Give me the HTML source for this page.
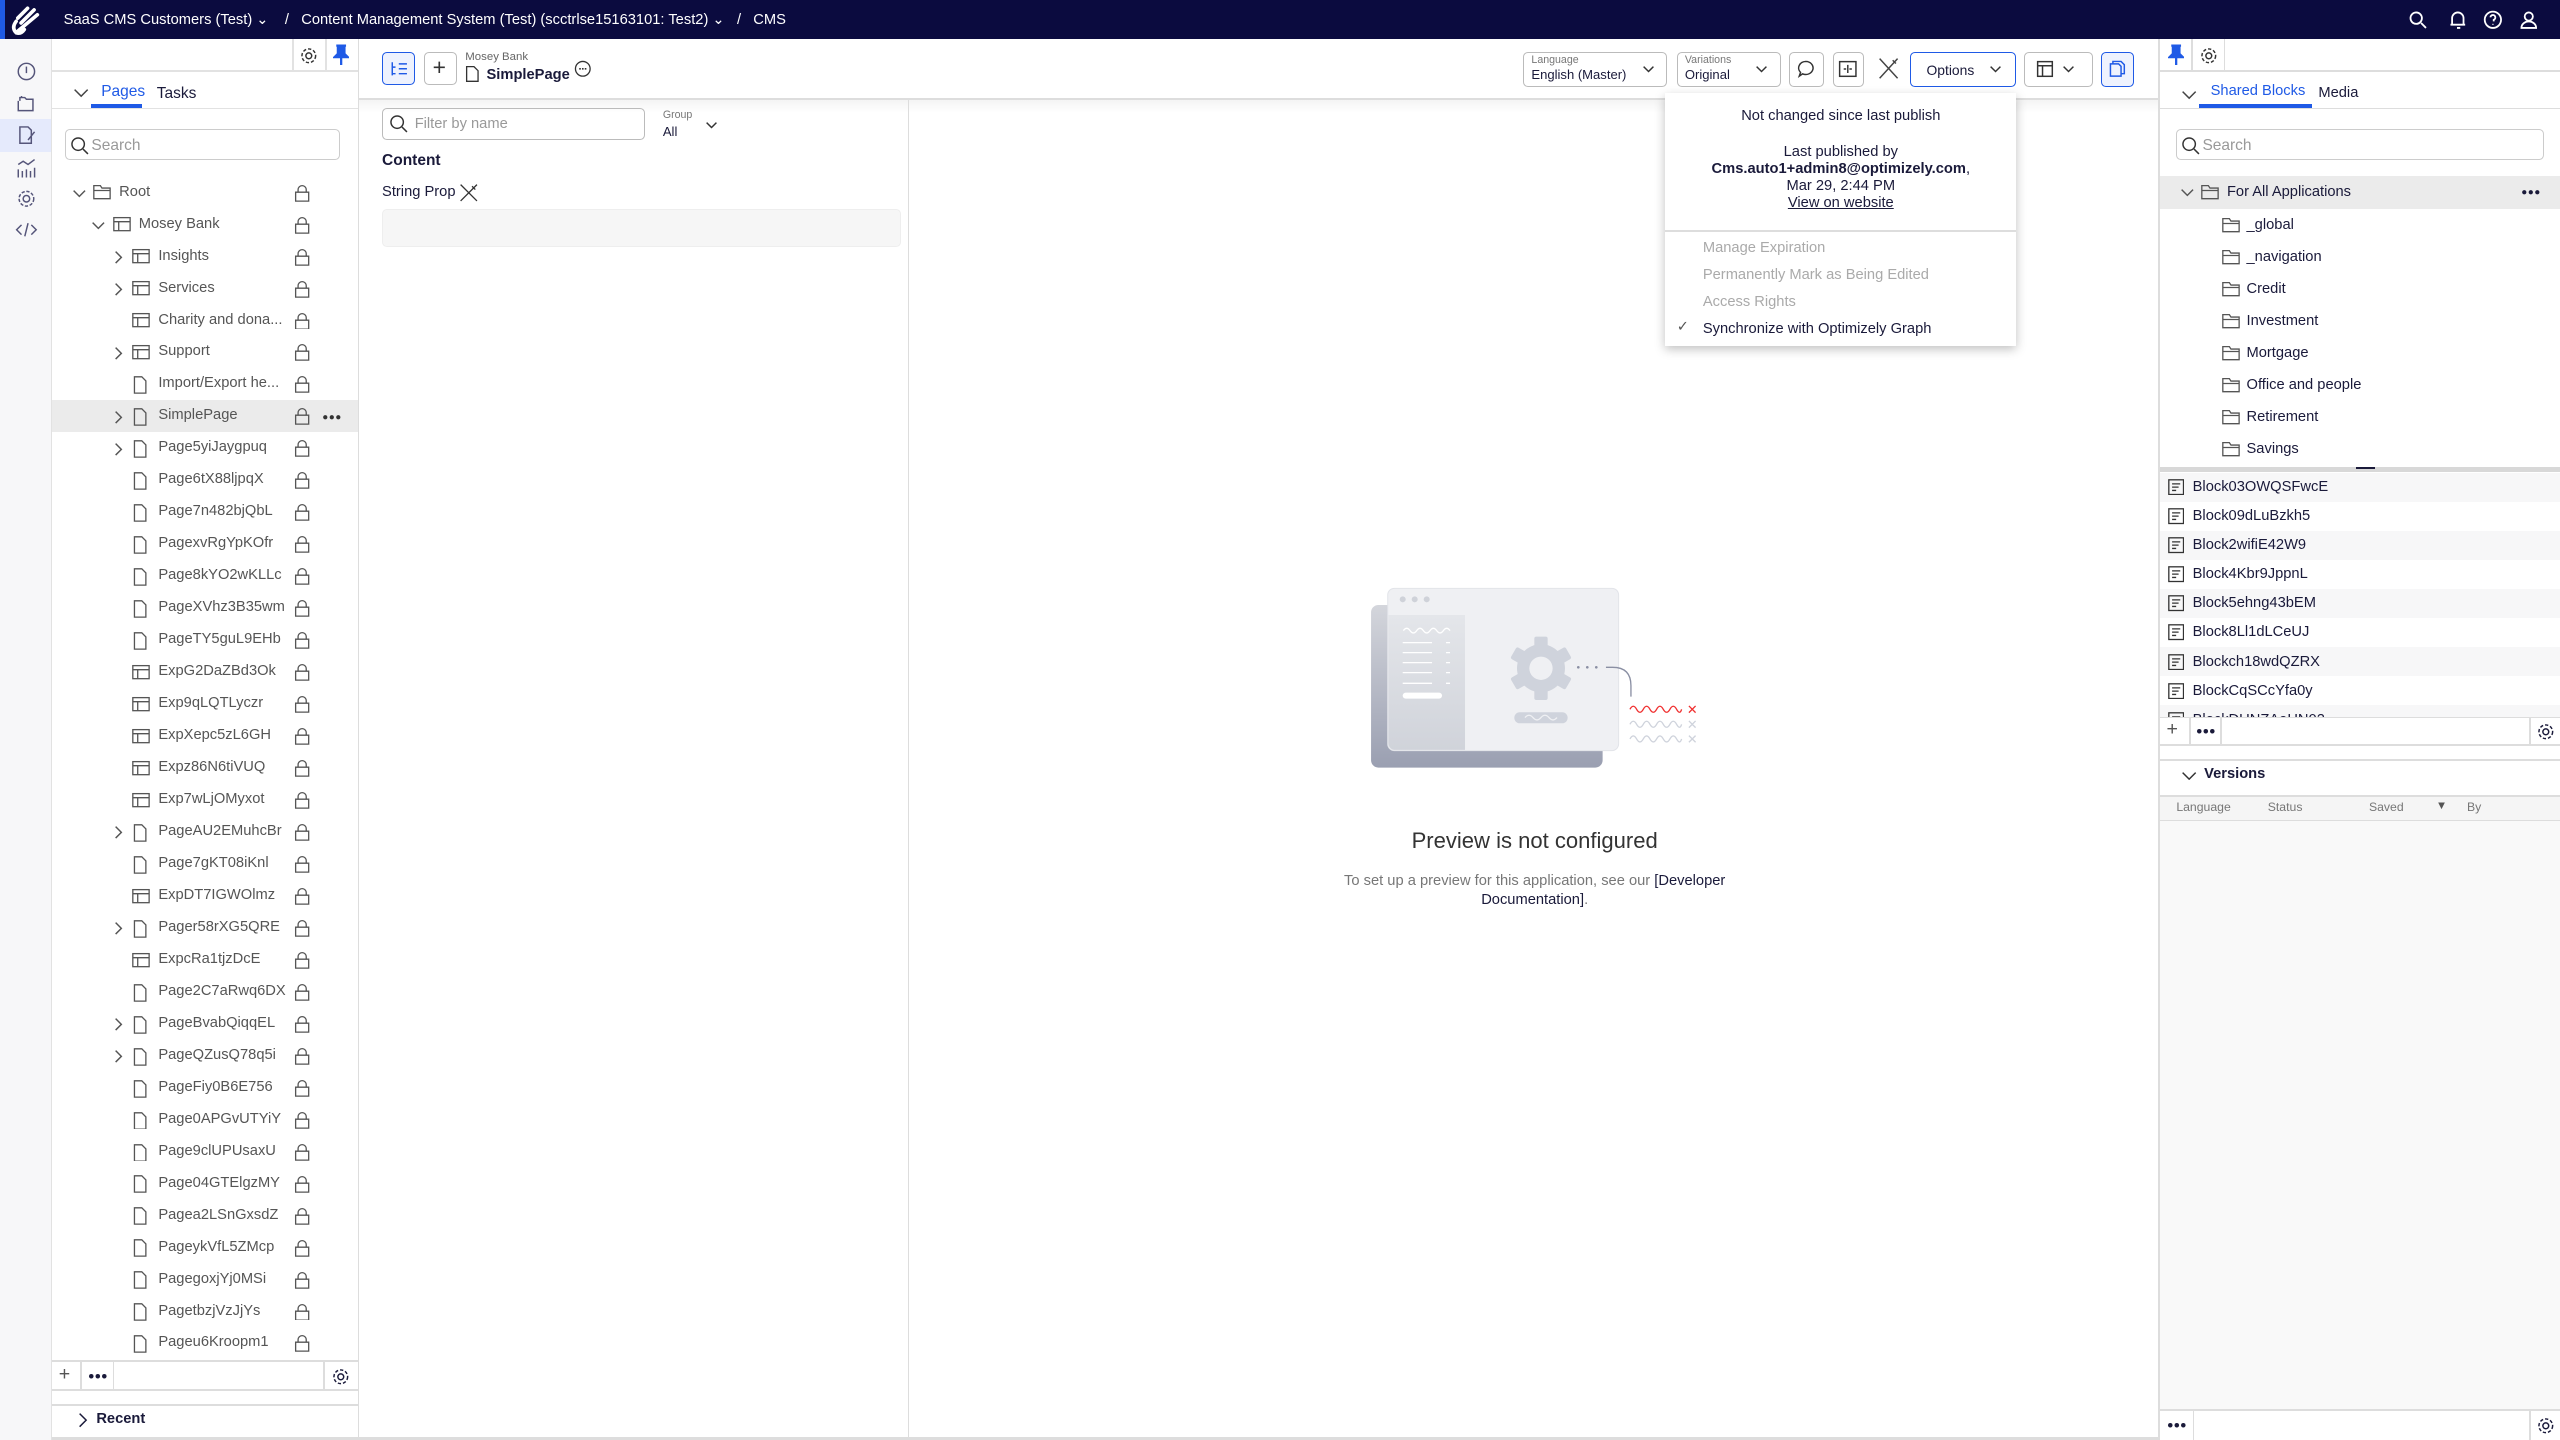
<!DOCTYPE html>
<html><head><meta charset="utf-8">
<style>
html,body{margin:0;padding:0;width:2560px;height:1440px;overflow:hidden;background:#fff}
#w{zoom:1.632653;width:1568px;height:882px;position:relative;font-family:"Liberation Sans",sans-serif;color:#1a1a3a;font-size:9px}
.a{position:absolute}
svg{display:block}
.row{position:absolute;left:32px;width:187px;height:19.6px;font-size:9px;color:#555}
.row span{position:absolute;top:4px;white-space:nowrap}
.bl{position:absolute;left:1323px;width:245px;height:17.8px;font-size:9px;color:#1a1a3a}
.fr{position:absolute;left:1323px;width:245px;height:19.6px;font-size:9px;color:#1a1a3a}
.btn{position:absolute;border:1px solid #bbb;border-radius:3px;background:#fff;box-sizing:border-box}
</style></head><body><div id="w">

<!-- top bar -->
<div class="a" style="left:0;top:0;width:1568px;height:24px;background:#0b0b3f"></div>
<div class="a" style="left:0;top:0;width:3px;height:24px;background:#1f5ae6"></div>
<svg class="a" style="left:5px;top:3px" width="20" height="19" viewBox="0 0 20 19"><path d="M12 2 L6 8 M16 3 L8 11 M18 6 L6 16 M5 10 Q2 14 5 17 Q8 18 10 15" stroke="#fff" stroke-width="2.2" fill="none" stroke-linecap="round"/></svg>
<div class="a" style="left:39px;top:7px;color:#fff;font-size:9px;white-space:nowrap">SaaS CMS Customers (Test) ⌄ &nbsp;&nbsp;&nbsp;/&nbsp;&nbsp; Content Management System (Test) (scctrlse15163101: Test2) ⌄ &nbsp;&nbsp;/&nbsp;&nbsp; CMS</div>
<svg class="a" style="left:1475px;top:6px" width="90" height="12" viewBox="0 0 90 12" fill="none" stroke="#fff" stroke-width="1.1"><circle cx="5" cy="5" r="3.5"/><path d="M8 8l3 3"/><path d="M26 9h9M27 9V5a3.5 3.5 0 0 1 7 0v4M30 11h2"/><circle cx="52" cy="6" r="5"/><path d="M50.5 4.5a1.5 1.5 0 1 1 2 1.5v1M52 8.5v.5"/><circle cx="74" cy="4" r="2.5"/><path d="M69.5 11a4.5 4 0 0 1 9 0z"/></svg>

<!-- left rail -->
<div class="a" style="left:0;top:24px;width:31px;height:858px;background:#f7f7f9;border-right:1px solid #e2e2e2"></div>
<div class="a" style="left:0;top:73px;width:31px;height:20px;background:#e5eafc"></div>
<svg class="a" style="left:9px;top:37px" width="14" height="112" viewBox="0 0 14 112" fill="none" stroke="#55557a" stroke-width="0.9"><circle cx="7" cy="7" r="5"/><path d="M7 4v4"/><path d="M2 25v6h9v-7H7l-1-1H3v2M4 23v-1"/><path d="M3 41h5l2 2v8H3z M12 44l-4 5"/><path d="M2 72V67M4.5 72v-4M7 72v-5M9.5 72v-4M12 72v-6M2 64l3-2 3 2 4-3"/><circle cx="7" cy="85" r="2"/><circle cx="7" cy="85" r="4.5" stroke-dasharray="2 1"/><path d="M4 101l-3 3 3 3M10 101l3 3-3 3M8 100l-2 8"/></svg>

<!-- left panel -->
<div class="a" style="left:32px;top:24px;width:187px;height:858px;border-right:1px solid #ddd;background:#fff"></div>
<div class="a" style="left:32px;top:43px;width:187px;height:1px;background:#e2e2e2"></div>
<div class="a" style="left:179px;top:24px;width:1px;height:20px;background:#e2e2e2"></div>
<div class="a" style="left:199px;top:24px;width:1px;height:20px;background:#e2e2e2"></div>
<svg class="a" style="left:183px;top:28px" width="12" height="12" viewBox="0 0 12 12" fill="none" stroke="#333" stroke-width="0.9"><circle cx="6" cy="6" r="1.8"/><circle cx="6" cy="6" r="4.2" stroke-dasharray="2 1.2"/></svg>
<svg class="a" style="left:204px;top:27px" width="10" height="13" viewBox="0 0 10 13"><path d="M2 1h6M3 1v5L1 8h8L7 6V1M5 8v5" stroke="#1f5ae6" stroke-width="1.4" fill="#1f5ae6"/></svg>
<svg class="a" style="left:45px;top:54px" width="10" height="6" viewBox="0 0 10 6"><path d="M1 1l4 4 4-4" stroke="#444" stroke-width="0.9" fill="none"/></svg>
<div class="a" style="left:62px;top:51px;font-size:9.5px;color:#1f5ae6">Pages</div>
<div class="a" style="left:56px;top:64px;width:31px;height:2px;background:#1f5ae6"></div>
<div class="a" style="left:96px;top:52px;font-size:9.5px;color:#1a1a3a">Tasks</div>
<div class="a" style="left:32px;top:66px;width:187px;height:1px;background:#e2e2e2"></div>
<div class="a" style="left:40px;top:79px;width:168px;height:19px;border:1px solid #ccc;border-radius:3px;box-sizing:border-box"></div>
<svg class="a" style="left:43px;top:83px" width="12" height="12" viewBox="0 0 12 12" fill="none" stroke="#333" stroke-width="0.9"><circle cx="5" cy="5" r="3.8"/><path d="M8 8l3 3"/></svg>
<div class="a" style="left:56px;top:84px;font-size:9.5px;color:#999">Search</div>

<div class="a" style="left:32px;top:245px;width:187px;height:19.6px;background:#ebebeb"></div>

<div id="tree"></div>

<!-- left bottom toolbar -->
<div class="a" style="left:32px;top:833px;width:187px;height:1px;background:#ddd"></div>
<div class="a" style="left:32px;top:851px;width:187px;height:1px;background:#ddd"></div>
<div class="a" style="left:32px;top:860px;width:187px;height:1px;background:#ddd"></div>
<div class="a" style="left:49px;top:834px;width:1px;height:17px;background:#ddd"></div>
<div class="a" style="left:69px;top:834px;width:1px;height:17px;background:#ddd"></div>
<div class="a" style="left:198px;top:834px;width:1px;height:17px;background:#ddd"></div>
<div class="a" style="left:36px;top:835px;font-size:12px;color:#555">+</div>
<svg class="a" style="left:54px;top:841px" width="12" height="4" viewBox="0 0 12 4" fill="#1a1a3a"><circle cx="2" cy="2" r="1.4"/><circle cx="6" cy="2" r="1.4"/><circle cx="10" cy="2" r="1.4"/></svg>
<svg class="a" style="left:203px;top:837px" width="12" height="12" viewBox="0 0 12 12" fill="none" stroke="#1a1a3a" stroke-width="0.9"><circle cx="6" cy="6" r="1.8"/><circle cx="6" cy="6" r="4.2" stroke-dasharray="2 1.2"/></svg>
<svg class="a" style="left:48px;top:865px" width="6" height="10" viewBox="0 0 6 10"><path d="M1 1l4 4-4 4" stroke="#1a1a3a" stroke-width="0.9" fill="none"/></svg>
<div class="a" style="left:59px;top:864px;font-size:9px;font-weight:bold;color:#1a1a3a">Recent</div>
<div class="a" style="left:32px;top:880px;width:1290px;height:2px;background:#ddd"></div>

<!-- main toolbar -->
<div class="a" style="left:220px;top:60px;width:1103px;height:1px;background:#ddd"></div>
<div class="a" style="left:220px;top:61px;width:1103px;height:8px;background:linear-gradient(#f4f4f4,#fff)"></div>
<div class="btn" style="left:234px;top:32px;width:20px;height:20px;border-color:#1f5ae6;background:#eef2fe"></div>
<svg class="a" style="left:238px;top:36px" width="12" height="12" viewBox="0 0 12 12" fill="none" stroke="#1f5ae6" stroke-width="0.9"><path d="M2 2v8M2 5h2M2 9h2M6 3h5M6 6h5M6 9h5"/></svg>
<div class="btn" style="left:260px;top:32px;width:20px;height:20px"></div>
<div class="a" style="left:265px;top:33px;font-size:14px;color:#333">+</div>
<div class="a" style="left:285px;top:31px;font-size:7px;color:#666">Mosey Bank</div>
<svg class="a" style="left:285px;top:40px" width="9" height="11" viewBox="0 0 9 11" fill="none" stroke="#333" stroke-width="0.8"><path d="M1 1h4.5L8 3.5V10H1z"/></svg>
<div class="a" style="left:298px;top:41px;font-size:9px;font-weight:bold;color:#1a1a3a">SimplePage</div>
<svg class="a" style="left:351px;top:36px" width="12" height="12" viewBox="0 0 12 12"><circle cx="6" cy="6" r="4.5" fill="none" stroke="#333" stroke-width="0.8"/><path d="M3.8 6h4.4" stroke="#333" stroke-dasharray="1 0.7"/></svg>

<div class="btn" style="left:933px;top:32px;width:88px;height:21px"></div>
<div class="a" style="left:938px;top:33px;font-size:6.5px;color:#777">Language</div>
<div class="a" style="left:938px;top:41px;font-size:8px;color:#1a1a3a">English (Master)</div>
<svg class="a" style="left:1006px;top:40px" width="8" height="5" viewBox="0 0 8 5"><path d="M1 1l3 3 3-3" stroke="#333" stroke-width="0.9" fill="none"/></svg>
<div class="btn" style="left:1027px;top:32px;width:64px;height:21px"></div>
<div class="a" style="left:1032px;top:33px;font-size:6.5px;color:#777">Variations</div>
<div class="a" style="left:1032px;top:41px;font-size:8px;color:#1a1a3a">Original</div>
<svg class="a" style="left:1075px;top:40px" width="8" height="5" viewBox="0 0 8 5"><path d="M1 1l3 3 3-3" stroke="#333" stroke-width="0.9" fill="none"/></svg>
<div class="btn" style="left:1096px;top:32px;width:21px;height:21px"></div>
<svg class="a" style="left:1100px;top:36px" width="12" height="12" viewBox="0 0 12 12" fill="none" stroke="#333" stroke-width="0.9"><path d="M6 1.5a4.5 4 0 1 1-2 7.6L2 10.5l.8-2.3A4.5 4 0 0 1 6 1.5z"/></svg>
<div class="btn" style="left:1123px;top:32px;width:19px;height:21px"></div>
<svg class="a" style="left:1126px;top:37px" width="12" height="11" viewBox="0 0 12 11" fill="none" stroke="#333" stroke-width="0.9"><rect x="1" y="1" width="10" height="9"/><path d="M6 3v5M3.5 5.5h1.5M7 5.5h1.5"/></svg>
<svg class="a" style="left:1150px;top:35px" width="13" height="14" viewBox="0 0 13 14" fill="none" stroke="#444" stroke-width="0.9"><path d="M1 1l11 12M12 1L1 13M9 2l2 2"/></svg>
<div class="btn" style="left:1170px;top:32px;width:65px;height:21px;border-color:#1f5ae6"></div>
<div class="a" style="left:1180px;top:38px;font-size:8.5px;color:#1a1a3a">Options</div>
<svg class="a" style="left:1218px;top:40px" width="8" height="5" viewBox="0 0 8 5"><path d="M1 1l3 3 3-3" stroke="#333" stroke-width="0.9" fill="none"/></svg>
<div class="btn" style="left:1240px;top:32px;width:42px;height:21px"></div>
<svg class="a" style="left:1247px;top:37px" width="11" height="11" viewBox="0 0 11 11" fill="none" stroke="#333" stroke-width="0.9"><rect x="1" y="1" width="9" height="9"/><path d="M1 3.5h9M4 3.5v6.5"/></svg>
<svg class="a" style="left:1263px;top:40px" width="8" height="5" viewBox="0 0 8 5"><path d="M1 1l3 3 3-3" stroke="#333" stroke-width="0.9" fill="none"/></svg>
<div class="btn" style="left:1287px;top:32px;width:20px;height:21px;border-color:#1f5ae6;background:#eef2fe"></div>
<svg class="a" style="left:1291px;top:36px" width="12" height="12" viewBox="0 0 12 12" fill="none" stroke="#1f5ae6" stroke-width="0.9"><path d="M3 3V1.5h5L10 3.5V9H8M1.5 3h5l1.5 1.5v6H1.5z"/></svg>

<!-- content pane -->
<div class="a" style="left:556px;top:61px;width:1px;height:819px;background:#ddd"></div>
<div class="a" style="left:1322px;top:24px;width:1px;height:858px;background:#ddd"></div>
<div class="a" style="left:234px;top:66px;width:161px;height:20px;border:1px solid #bbb;border-radius:3px;box-sizing:border-box"></div>
<svg class="a" style="left:238px;top:70px" width="12" height="12" viewBox="0 0 12 12" fill="none" stroke="#333" stroke-width="0.9"><circle cx="5" cy="5" r="3.8"/><path d="M8 8l3 3"/></svg>
<div class="a" style="left:254px;top:71px;font-size:9px;color:#999">Filter by name</div>
<div class="a" style="left:406px;top:67px;font-size:6.5px;color:#777">Group</div>
<div class="a" style="left:406px;top:76px;font-size:8px;color:#1a1a3a">All</div>
<svg class="a" style="left:432px;top:74px" width="8" height="5" viewBox="0 0 8 5"><path d="M1 1l3 3 3-3" stroke="#333" stroke-width="0.9" fill="none"/></svg>
<div class="a" style="left:234px;top:93px;font-size:9.5px;font-weight:bold;color:#1a1a3a">Content</div>
<div class="a" style="left:234px;top:113px;font-size:9px;color:#1a1a3a">String Prop</div>
<svg class="a" style="left:281px;top:112px" width="12" height="12" viewBox="0 0 12 12" fill="none" stroke="#333" stroke-width="0.8"><path d="M1 1l10 10M11 1L1 11M8 2l2 2"/></svg>
<div class="a" style="left:234px;top:128px;width:318px;height:23px;background:#f6f6f6;border:1px solid #eee;border-radius:3px;box-sizing:border-box"></div>

<!-- illustration -->
<svg class="a" style="left:814.6px;top:343px" width="275.6" height="134.7" viewBox="0 0 1350 660">
<defs><linearGradient id="g1" x1="0" y1="0" x2="0" y2="1"><stop offset="0" stop-color="#d4d6dc"/><stop offset="1" stop-color="#9a9fb1"/></linearGradient>
<linearGradient id="g2" x1="0" y1="0" x2="0" y2="1"><stop offset="0" stop-color="#e4e6ea"/><stop offset="1" stop-color="#d0d3da"/></linearGradient></defs>
<rect x="123" y="135" width="695" height="488" rx="22" fill="url(#g1)"/>
<rect x="173" y="85" width="693" height="487" rx="20" fill="#eff0f3" stroke="#e2e4e9" stroke-width="3"/>
<path d="M175 165h230v405H195a20 20 0 0 1-20-20z" fill="url(#g2)"/>
<circle cx="218" cy="118" r="9" fill="#cfd2d9"/><circle cx="254" cy="118" r="9" fill="#cfd2d9"/><circle cx="290" cy="118" r="9" fill="#cfd2d9"/>
<g stroke="#fff" stroke-width="4" fill="none"><path d="M220 212q10-14 20 0t20 0 20 0 20 0 20 0 20 0 20 0"/><path d="M218 248h88M218 278h88M218 308h88M218 338h88M218 370h88M348 248h12M348 278h12M348 308h12M348 338h12M348 370h12"/></g>
<rect x="218" y="398" width="118" height="18" rx="9" fill="#fff"/>
<g transform="translate(633,325)" fill="#cfd3dc"><circle r="72"/><g id="t"><rect x="-20" y="-95" width="40" height="45" rx="6"/></g><use href="#t" transform="rotate(60)"/><use href="#t" transform="rotate(120)"/><use href="#t" transform="rotate(180)"/><use href="#t" transform="rotate(240)"/><use href="#t" transform="rotate(300)"/><circle r="35" fill="#eff0f3"/></g>
<rect x="553" y="457" width="160" height="33" rx="16" fill="#cfd3dc"/>
<path d="M585 473q12-14 24 0t24 0 24 0 24 0" stroke="#eff0f3" stroke-width="4" fill="none"/>
<circle cx="745" cy="322" r="4" fill="#8a8fa3"/><circle cx="772" cy="322" r="4" fill="#8a8fa3"/><circle cx="799" cy="322" r="4" fill="#8a8fa3"/>
<path d="M828 322h20q55 0 55 55v33" stroke="#8a8fa3" stroke-width="4" fill="none"/>
<path d="M900 448q10-18 20 0t20 0 20 0 20 0 20 0 20 0 20 0 15 0" stroke="#f03030" stroke-width="4" fill="none"/>
<path d="M1077 438l20 20M1097 438l-20 20" stroke="#f03030" stroke-width="4"/>
<g stroke="#cfd3dc" stroke-width="4" fill="none"><path d="M900 493q10-18 20 0t20 0 20 0 20 0 20 0 20 0 20 0 15 0M900 537q10-18 20 0t20 0 20 0 20 0 20 0 20 0 20 0 15 0M1077 483l20 20M1097 483l-20 20M1077 527l20 20M1097 527l-20 20"/></g>
</svg>
<div class="a" style="left:740px;top:507px;width:400px;text-align:center;font-size:13.5px;color:#333">Preview is not configured</div>
<div class="a" style="left:810px;top:534px;width:260px;text-align:center;font-size:9px;line-height:11.5px;color:#777">To set up a preview for this application, see our <span style="color:#1a1a3a">[Developer Documentation]</span>.</div>

<!-- dropdown -->
<div class="a" style="left:1020px;top:57px;width:215px;height:155px;background:#fff;box-shadow:0 2px 6px rgba(0,0,0,.25)"></div>
<div class="a" style="left:1020px;top:66px;width:215px;text-align:center;font-size:9px;color:#1a1a3a">Not changed since last publish</div>
<div class="a" style="left:1020px;top:88px;width:215px;text-align:center;font-size:9px;line-height:10.5px;color:#1a1a3a">Last published by<br><b>Cms.auto1+admin8@optimizely.com</b>,<br>Mar 29, 2:44 PM<br><u>View on website</u></div>
<div class="a" style="left:1020px;top:141px;width:215px;height:1px;background:#ddd"></div>
<div class="a" style="left:1043px;top:144px;font-size:9px;color:#aaa;line-height:16.6px">Manage Expiration<br>Permanently Mark as Being Edited<br>Access Rights<br><span style="color:#1a1a3a">Synchronize with Optimizely Graph</span></div>
<div class="a" style="left:1027px;top:195px;font-size:9px;color:#555">✓</div>

<!-- right panel -->
<div class="a" style="left:1323px;top:43px;width:245px;height:1px;background:#ddd"></div>
<div class="a" style="left:1342px;top:24px;width:1px;height:20px;background:#ddd"></div>
<div class="a" style="left:1362px;top:24px;width:1px;height:20px;background:#ddd"></div>
<svg class="a" style="left:1328px;top:27px" width="10" height="13" viewBox="0 0 10 13"><path d="M2 1h6M3 1v5L1 8h8L7 6V1M5 8v5" stroke="#1f5ae6" stroke-width="1.4" fill="#1f5ae6"/></svg>
<svg class="a" style="left:1347px;top:28px" width="12" height="12" viewBox="0 0 12 12" fill="none" stroke="#333" stroke-width="0.9"><circle cx="6" cy="6" r="1.8"/><circle cx="6" cy="6" r="4.2" stroke-dasharray="2 1.2"/></svg>
<svg class="a" style="left:1336px;top:55px" width="10" height="6" viewBox="0 0 10 6"><path d="M1 1l4 4 4-4" stroke="#444" stroke-width="0.9" fill="none"/></svg>
<div class="a" style="left:1354px;top:51px;font-size:9px;color:#1f5ae6">Shared Blocks</div>
<div class="a" style="left:1347px;top:64px;width:69px;height:2px;background:#1f5ae6"></div>
<div class="a" style="left:1420px;top:52px;font-size:9px;color:#1a1a3a">Media</div>
<div class="a" style="left:1323px;top:66px;width:245px;height:1px;background:#ddd"></div>
<div class="a" style="left:1333px;top:79px;width:225px;height:19px;border:1px solid #ccc;border-radius:3px;box-sizing:border-box"></div>
<svg class="a" style="left:1336px;top:83px" width="12" height="12" viewBox="0 0 12 12" fill="none" stroke="#333" stroke-width="0.9"><circle cx="5" cy="5" r="3.8"/><path d="M8 8l3 3"/></svg>
<div class="a" style="left:1349px;top:84px;font-size:9.5px;color:#999">Search</div>
<div class="a" style="left:1323px;top:108px;width:245px;height:20px;background:#ebebeb"></div>
<div id="rtree"></div>
<div class="a" style="left:1323px;top:286px;width:245px;height:3px;background:#d8d8d8"></div>
<div class="a" style="left:1443px;top:286px;width:12px;height:1px;background:#1a1a3a"></div>
<div id="blocks"></div>
<div class="a" style="left:1323px;top:439px;width:245px;height:1px;background:#ddd"></div>
<div class="a" style="left:1323px;top:456px;width:245px;height:1px;background:#ddd"></div>
<div class="a" style="left:1323px;top:465px;width:245px;height:1px;background:#ddd"></div>
<div class="a" style="left:1341px;top:440px;width:1px;height:16px;background:#ddd"></div>
<div class="a" style="left:1360px;top:440px;width:1px;height:16px;background:#ddd"></div>
<div class="a" style="left:1549px;top:440px;width:1px;height:16px;background:#ddd"></div>
<div class="a" style="left:1327px;top:440px;font-size:12px;color:#555">+</div>
<svg class="a" style="left:1345px;top:446px" width="12" height="4" viewBox="0 0 12 4" fill="#1a1a3a"><circle cx="2" cy="2" r="1.4"/><circle cx="6" cy="2" r="1.4"/><circle cx="10" cy="2" r="1.4"/></svg>
<svg class="a" style="left:1553px;top:442px" width="12" height="12" viewBox="0 0 12 12" fill="none" stroke="#1a1a3a" stroke-width="0.9"><circle cx="6" cy="6" r="1.8"/><circle cx="6" cy="6" r="4.2" stroke-dasharray="2 1.2"/></svg>
<svg class="a" style="left:1336px;top:472px" width="10" height="6" viewBox="0 0 10 6"><path d="M1 1l4 4 4-4" stroke="#333" stroke-width="0.9" fill="none"/></svg>
<div class="a" style="left:1350px;top:469px;font-size:9px;font-weight:bold;color:#1a1a3a">Versions</div>
<div class="a" style="left:1323px;top:487px;width:245px;height:1px;background:#ddd"></div>
<div class="a" style="left:1323px;top:488px;width:245px;height:14px;background:#f5f5f5;border-bottom:1px solid #ddd"></div>
<div class="a" style="left:1333px;top:490px;font-size:7.5px;color:#777">Language</div>
<div class="a" style="left:1389px;top:490px;font-size:7.5px;color:#777">Status</div>
<div class="a" style="left:1451px;top:490px;font-size:7.5px;color:#777">Saved</div>
<div class="a" style="left:1492px;top:490px;font-size:7px;color:#555">▼</div>
<div class="a" style="left:1511px;top:490px;font-size:7.5px;color:#777">By</div>
<div class="a" style="left:1323px;top:503px;width:245px;height:360px;background:#f9f9f9"></div>
<div class="a" style="left:1323px;top:863px;width:245px;height:1px;background:#ddd"></div>
<div class="a" style="left:1343px;top:864px;width:1px;height:18px;background:#ddd"></div>
<div class="a" style="left:1549px;top:864px;width:1px;height:18px;background:#ddd"></div>
<svg class="a" style="left:1327px;top:871px" width="12" height="4" viewBox="0 0 12 4" fill="#1a1a3a"><circle cx="2" cy="2" r="1.4"/><circle cx="6" cy="2" r="1.4"/><circle cx="10" cy="2" r="1.4"/></svg>
<svg class="a" style="left:1553px;top:867px" width="12" height="12" viewBox="0 0 12 12" fill="none" stroke="#1a1a3a" stroke-width="0.9"><circle cx="6" cy="6" r="1.8"/><circle cx="6" cy="6" r="4.2" stroke-dasharray="2 1.2"/></svg>

<script>
var P='<svg width="10" height="11" viewBox="0 0 10 11" fill="none" stroke="#555" stroke-width="0.8"><path d="M1.5 .5h4.5L8.5 3v7.5h-7z"/></svg>';
var L='<svg width="11" height="10" viewBox="0 0 11 10" fill="none" stroke="#555" stroke-width="0.8"><rect x=".5" y="1" width="10" height="8"/><path d="M.5 3.5h10M3.5 3.5V9"/></svg>';
var F='<svg width="11" height="10" viewBox="0 0 11 10" fill="none" stroke="#555" stroke-width="0.8"><path d="M.5 1h4l1 1.5h5V9H.5zM.5 4h10"/></svg>';
var K='<svg width="10" height="11" viewBox="0 0 10 11" fill="none" stroke="#555" stroke-width="0.8"><path d="M2.5 5V3.5a2.5 2.5 0 0 1 5 0V5M1 5h8v5.5H1z"/></svg>';
var CD='<svg width="9" height="6" viewBox="0 0 9 6"><path d="M1 1l3.5 3.5L8 1" stroke="#555" stroke-width="0.9" fill="none"/></svg>';
var CR='<svg width="6" height="9" viewBox="0 0 6 9"><path d="M1 1l3.5 3.5L1 8" stroke="#555" stroke-width="0.9" fill="none"/></svg>';
var DOTS='<svg width="12" height="4" viewBox="0 0 12 4" fill="#333"><circle cx="2" cy="2" r="1.3"/><circle cx="6" cy="2" r="1.3"/><circle cx="10" cy="2" r="1.3"/></svg>';
var rows=[["Root",0,"v",F],["Mosey Bank",1,"v",L],["Insights",2,">",L],["Services",2,">",L],["Charity and dona...",2,"",L],["Support",2,">",L],["Import/Export he...",2,"",P],["SimplePage",2,">",P],["Page5yiJaygpuq",2,">",P],["Page6tX88ljpqX",2,"",P],["Page7n482bjQbL",2,"",P],["PagexvRgYpKOfr",2,"",P],["Page8kYO2wKLLc",2,"",P],["PageXVhz3B35wm",2,"",P],["PageTY5guL9EHb",2,"",P],["ExpG2DaZBd3Ok",2,"",L],["Exp9qLQTLyczr",2,"",L],["ExpXepc5zL6GH",2,"",L],["Expz86N6tiVUQ",2,"",L],["Exp7wLjOMyxot",2,"",L],["PageAU2EMuhcBr",2,">",P],["Page7gKT08iKnl",2,"",P],["ExpDT7IGWOlmz",2,"",L],["Pager58rXG5QRE",2,">",P],["ExpcRa1tjzDcE",2,"",L],["Page2C7aRwq6DX",2,"",P],["PageBvabQiqqEL",2,">",P],["PageQZusQ78q5i",2,">",P],["PageFiy0B6E756",2,"",P],["Page0APGvUTYiY",2,"",P],["Page9clUPUsaxU",2,"",P],["Page04GTElgzMY",2,"",P],["Pagea2LSnGxsdZ",2,"",P],["PageykVfL5ZMcp",2,"",P],["PagegoxjYj0MSi",2,"",P],["PagetbzjVzJjYs",2,"",P],["Pageu6Kroopm1",2,"",P]];
var h='';
rows.forEach(function(r,i){var y=108.5+i*19.58,o=r[1]*12;
var ch='';
if(r[2]=='v')ch='<span style="left:'+(12+o)+'px;top:7px">'+CD+'</span>';
if(r[2]=='>')ch='<span style="left:'+(38+o-24)+'px;top:5.5px">'+CR+'</span>';
h+='<div class="row" style="top:'+y+'px">'+ch+'<span style="left:'+(25+o)+'px;top:4.5px">'+r[3]+'</span><span style="left:'+(41+o)+'px">'+r[0]+'</span><span style="left:148px;top:4px">'+K+'</span>'+(i==7?'<span style="left:165px;top:8px">'+DOTS+'</span>':'')+'</div>';});
document.getElementById('tree').innerHTML=h;
var rt='<div class="fr" style="top:108px"><span class="a" style="left:12px;top:7px">'+CD+'</span><span class="a" style="left:25px;top:5px">'+F+'</span><span class="a" style="left:41px;top:5px">For All Applications</span><span class="a" style="left:221px;top:8px">'+DOTS.replace('#333','#1a1a3a')+'</span></div>';
["_global","_navigation","Credit","Investment","Mortgage","Office and people","Retirement","Savings"].forEach(function(n,i){rt+='<div class="fr" style="top:'+(128+i*19.6)+'px"><span class="a" style="left:38px;top:5px">'+F+'</span><span class="a" style="left:53px;top:5px">'+n+'</span></div>';});
document.getElementById('rtree').innerHTML=rt;
var B='<svg width="10" height="10" viewBox="0 0 10 10" fill="none" stroke="#333" stroke-width="0.8"><rect x=".5" y=".5" width="9" height="9"/><path d="M2.5 3h5M2.5 5h4M2.5 7h2.5"/></svg>';
var bh='';["Block03OWQSFwcE","Block09dLuBzkh5","Block2wifiE42W9","Block4Kbr9JppnL","Block5ehng43bEM","Block8Ll1dLCeUJ","Blockch18wdQZRX","BlockCqSCcYfa0y","BlockDUNZAoHN02"].forEach(function(n,i){var t=289.5+i*17.8;var hh=i==8?(439-t):17.8;bh+='<div class="bl" style="top:'+t+'px;height:'+hh+'px;overflow:hidden;background:'+(i%2==0?'#f7f7f8':'#fff')+'"><span class="a" style="left:5px;top:4px">'+B+'</span><span class="a" style="left:20px;top:4px">'+n+'</span></div>';});
document.getElementById('blocks').innerHTML=bh;
</script>
</div></body></html>
